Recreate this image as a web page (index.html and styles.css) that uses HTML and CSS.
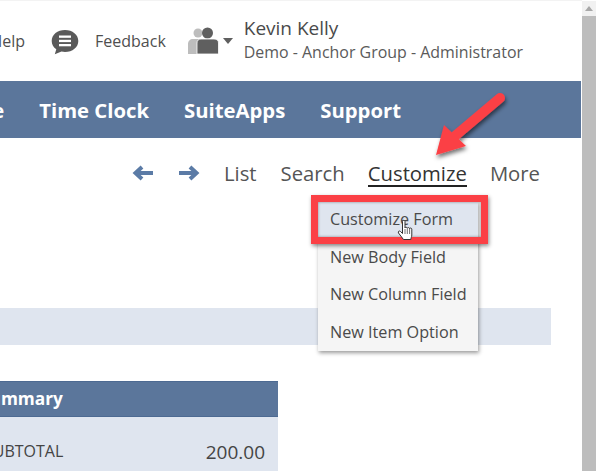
FILE: index.html
```html
<!DOCTYPE html>
<html lang="en">
<head>
  <meta charset="UTF-8">
  <meta name="viewport" content="width=device-width, initial-scale=1.0">
  <title>Customize Form</title>
  <link rel="stylesheet" href="styles.css">
</head>
<body>

<div id="page">
  <div id="main">
    <div id="top-bar">
      <span class="top-link help-link">Help</span>
      <svg class="feedback-icon" width="28" height="26" viewBox="0 0 28 26">
        <path d="M14 1C6.5 1 .7 5.600 .7 12c0 3.500 1.800 6.400 4.600 8.300L3.800 25.300 10.500 22.600C11.600 22.800 12.800 23 14 23c7.500 0 13.300-4.700 13.300-11S21.500 1 14 1z" fill="#5a5a5a"/>
        <rect x="8" y="6.500" width="12" height="2.300" fill="#fff"/>
        <rect x="8" y="10.800" width="12" height="2.300" fill="#fff"/>
        <rect x="8" y="15" width="12" height="2.300" fill="#fff"/>
      </svg>
      <span class="top-link feedback-link">Feedback</span>
      <svg class="people-icon" width="31" height="28" viewBox="0 0 31 28">
        <circle cx="10" cy="6" r="4.500" fill="#bdbdbd"/>
        <path d="M0 27V17c0-3 2-5 5-5h8v15z" fill="#bdbdbd"/>
        <circle cx="19.500" cy="6" r="5.500" fill="#5f5f5f"/>
        <path d="M9 27V16c0-2.500 1.500-4 4-4h13c3 0 4.500 1.500 4.500 4v11z" fill="#5f5f5f" stroke="#fff" stroke-width=".8"/>
      </svg>
      <span class="caret"></span>
      <div class="user-box">
        <div class="user-name">Kevin Kelly</div>
        <div class="user-role">Demo - Anchor Group - Administrator</div>
      </div>
    </div>

    <div id="nav-bar">
      <span class="nav-item">Commerce</span>
      <span class="nav-item">Time Clock</span>
      <span class="nav-item">SuiteApps</span>
      <span class="nav-item">Support</span>
    </div>

    <div id="tool-bar">
      <svg class="tool-arrow" width="22" height="18" viewBox="0 0 22 18">
        <path d="M21 9H5M10 3L3.500 9l6.500 6" fill="none" stroke="#5b7ba6" stroke-width="4"/>
      </svg>
      <svg class="tool-arrow" width="22" height="18" viewBox="0 0 22 18">
        <path d="M1 9h16M12 3l6.500 6-6.500 6" fill="none" stroke="#5b7ba6" stroke-width="4"/>
      </svg>
      <span class="tool-link list-link">List</span>
      <span class="tool-link">Search</span>
      <span class="tool-link active-link">Customize</span>
      <span class="tool-link more-link">More</span>
    </div>

    <div id="section-bar"></div>

    <div id="summary">
      <div class="summary-head">Summary</div>
      <div class="summary-row">
        <span class="summary-label">SUBTOTAL</span>
        <span class="summary-value">200.00</span>
      </div>
    </div>

    <div id="menu">
      <div class="menu-item menu-item-on">Customize Form</div>
      <div class="menu-item">New Body Field</div>
      <div class="menu-item">New Column Field</div>
      <div class="menu-item">New Item Option</div>
    </div>
    <div id="red-box"></div>

    <svg id="red-arrow" width="90" height="80" viewBox="0 0 90 80">
      <defs>
        <filter id="soft" x="-20%" y="-20%" width="150%" height="150%">
          <feDropShadow dx="1" dy="3" stdDeviation="2" flood-color="#000" flood-opacity=".55"/>
        </filter>
      </defs>
      <g filter="url(#soft)">
        <path d="M70 8L25 46" stroke="#fb4045" stroke-width="10" stroke-linecap="round"/>
        <path d="M6 65L14 35 36 56z" fill="#fb4045"/>
      </g>
    </svg>

    <svg id="hand-cursor" width="18" height="24" viewBox="0 0 18 24">
      <path d="M5.500 2.500c0-1.600 2.500-1.600 2.500 0V9c0-1 2.300-1 2.300 .3 0-1 2.300-1 2.300 .3 0-.8 2.200-.8 2.200 .5V16c0 2-1 3-1 4.500H6.500L1.500 14c-1-1.400 1-2.800 2-1.500l2 2z" fill="#fff" stroke="#333" stroke-width="1"/>
      <path d="M8 10v5M10.300 10v5M12.600 10v5" stroke="#333" stroke-width=".7"/>
    </svg>
  </div>

  <div id="scroll-bar">
    <div class="scroll-up"></div>
    <div class="scroll-thumb"></div>
  </div>
</div>

</body>
</html>
```

FILE: styles.css
```css
html, body {
    margin: 0;
    padding: 0;
    height: 100%;
    overflow: hidden;
    background: #fff;
}

body {
    font-family: 'Open Sans', sans-serif;
    color: #4a4a4a;
}

#page {
    display: flex;
    width: 596px;
    height: 471px;
    overflow: hidden;
}

#main {
    position: relative;
    width: 582px;
    flex-shrink: 0;
    overflow: hidden;
    border-top: 1px solid #f3f3f3;
    box-sizing: border-box;
}

#top-bar {
    display: flex;
    align-items: center;
    justify-content: flex-end;
    height: 80px;
    padding-right: 59px;
    white-space: nowrap;
}

.top-link {
    font-size: 16px;
    color: #4f4f4f;
    flex-shrink: 0;
}

.help-link {
    margin-right: 26px;
}

.feedback-icon {
    flex-shrink: 0;
    margin-right: 16px;
    margin-top: 1px;
}

.feedback-link {
    margin-right: 22px;
}

.people-icon {
    flex-shrink: 0;
}

.caret {
    width: 0;
    height: 0;
    flex-shrink: 0;
    margin: 0 11px 0 4px;
    border-left: 5px solid transparent;
    border-right: 5px solid transparent;
    border-top: 6px solid #5f5f5f;
}

.user-box {
    flex-shrink: 0;
    margin-bottom: 4px;
}

.user-name {
    font-size: 19px;
    line-height: 25px;
    color: #4a4a4a;
}

.user-role {
    font-size: 15.95px;
    line-height: 22px;
    color: #5a5a5a;
}

#nav-bar {
    display: flex;
    align-items: center;
    justify-content: flex-end;
    gap: 35px;
    height: 57px;
    padding-right: 180px;
    margin-right: 1px;
    background: #5b769b;
    white-space: nowrap;
}

.nav-item {
    flex-shrink: 0;
    font-size: 20.3px;
    font-weight: 700;
    color: #fff;
}

#tool-bar {
    display: flex;
    align-items: center;
    justify-content: flex-end;
    height: 70px;
    padding-right: 42px;
    white-space: nowrap;
}

.tool-arrow {
    margin-right: 24px;
}

.tool-link {
    font-size: 20.3px;
    color: #555;
    margin-left: 24px;
}

.list-link {
    margin-left: 0;
}

.active-link {
    color: #333;
    border-bottom: 2px solid #222;
    line-height: 24px;
    margin-top: 2px;
    margin-left: 23px;
}

.more-link {
    margin-left: 23px;
}

#section-bar {
    height: 37px;
    width: 551px;
    margin-top: 100px;
    background: #dfe5ef;
}

#summary {
    width: 318px;
    margin: 36px 0 0 -40px;
    background: #dfe5ef;
    height: 90px;
}

.summary-head {
    height: 34px;
    line-height: 34px;
    padding-left: 20px;
    font-size: 17.3px;
    font-weight: 700;
    color: #fff;
    background: #5b769b;
    border-top: 1px solid #4d6a92;
    border-bottom: 1px solid #4d6a92;
}

.summary-row {
    display: flex;
    align-items: center;
    justify-content: space-between;
    height: 70px;
    padding: 0 13px 0 0;
}

.summary-label {
    font-size: 16px;
    color: #444;
    padding-left: 24px;
    margin-bottom: 2px;
}

.summary-value {
    font-size: 19px;
    color: #444;
}

#menu {
    position: absolute;
    top: 200px;
    left: 318px;
    width: 160px;
    height: 150px;
    background: #f5f5f5;
    box-shadow: 1px 2px 4px rgba(0, 0, 0, 0.4);
}

.menu-item {
    height: 37.5px;
    line-height: 37.5px;
    padding-left: 12px;
    font-size: 16.2px;
    color: #4a4a4a;
    white-space: nowrap;
}

.menu-item-on {
    background: #dfe5ef;
}

#red-box {
    position: absolute;
    top: 194px;
    left: 311px;
    width: 177px;
    height: 49px;
    box-sizing: border-box;
    border: 7px solid #fb4045;
    box-shadow: 1px 2px 4px rgba(0, 0, 0, 0.45), inset 0 0 3px rgba(0, 0, 0, 0.4);
}

#red-arrow {
    position: absolute;
    top: 89px;
    left: 430px;
}

#hand-cursor {
    position: absolute;
    top: 218px;
    left: 397px;
}

#scroll-bar {
    display: flex;
    flex-direction: column;
    width: 14px;
    margin-top: 1px;
    background: #f1f1f1;
}

.scroll-up {
    height: 15px;
    position: relative;
}

.scroll-up::after {
    content: "";
    position: absolute;
    top: 5px;
    left: 3px;
    border-left: 4px solid transparent;
    border-right: 4px solid transparent;
    border-bottom: 5px solid #a8a8a8;
}

.scroll-thumb {
    flex: 1;
    background: #bdbdbd;
}
```
